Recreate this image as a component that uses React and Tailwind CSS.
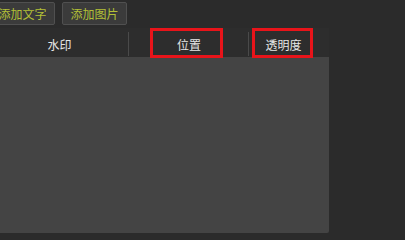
import React from 'react';

const tabs = [
  { label: '水印', width: 'w-[139px]' },
  { label: '位置', width: 'w-[120px]' },
  { label: '透明度', width: 'w-[69px]' },
];

const App = () => {
  return (
    <div
      className="relative w-[405px] h-[240px] overflow-hidden bg-[#2b2b2b]"
      style={{ fontFamily: '"Noto Sans CJK SC", "Noto Sans", sans-serif' }}
    >
      <div className="-ml-[10px] flex flex-col">
        {/* toolbar buttons */}
        <div className="flex gap-[7px] pt-[2px] h-[28px]">
          {['添加文字', '添加图片'].map((label) => (
            <button
              key={label}
              className="w-[65px] h-[23px] rounded-[2px] border border-[#505050] bg-[#3b3b3b] text-[12px] leading-none text-[#b3c036]"
            >
              {label}
            </button>
          ))}
        </div>

        {/* tab bar */}
        <div className="flex w-[339px] h-[29px] bg-[#2d2d2d]">
          {tabs.map((tab, i) => (
            <div key={tab.label} className={`relative flex items-center justify-center pt-[4px] ${tab.width}`}>
              <span className="text-[12px] leading-none text-[#e6e6e6]">{tab.label}</span>
              {i < tabs.length - 1 && (
                <span className="absolute right-0 top-[4px] h-[24px] w-px bg-[#4a4a4a]" />
              )}
            </div>
          ))}
        </div>

        {/* content panel */}
        <div className="w-[339px] h-[176px] bg-[#444444] rounded-br-[2px]" />
      </div>

      {/* annotation boxes */}
      <div className="absolute left-[150px] top-[28px] w-[73px] h-[30px] border-[3px] border-[#e8141a]" />
      <div className="absolute left-[252px] top-[28px] w-[61px] h-[30px] border-[3px] border-[#e8141a]" />
    </div>
  );
};

export default App;
